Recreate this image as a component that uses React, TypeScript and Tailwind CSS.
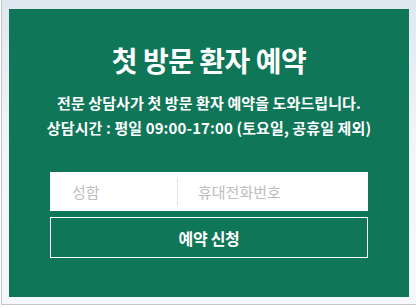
export default function App() {
  const font = { fontFamily: '"Noto Sans CJK KR", "Noto Sans", sans-serif' };
  return (
    <div className="w-[416px] h-[308px] bg-white overflow-hidden" style={font}>
      <div className="h-[305px] ml-px border-l border-b border-[#c4c6c8] bg-gradient-to-b from-[#dfe7f0] via-[#f3f6f8] to-[#f6f8f9] pl-[7px] pt-[9px] pr-[6px]">
        <section className="w-[400px] h-[288px] bg-[#0f7658] flex flex-col items-center text-white">
          <h2 className="mt-[33px] text-[28px] leading-[36px] font-bold tracking-[-0.5px]">
            첫 방문 환자 예약
          </h2>
          <p className="mt-[12px] text-[15px] leading-[25px] font-bold tracking-[0.1px] text-center">
            전문 상담사가 첫 방문 환자 예약을 도와드립니다.
            <br />
            상담시간 : 평일 09:00-17:00 (토요일, 공휴일 제외)
          </p>
          <div className="mt-[32px] w-[318px] h-[39px] bg-white flex items-center">
            <input
              placeholder="성함"
              className="w-[127px] h-full pl-[22px] text-[15px] text-[#555] placeholder:text-[#bdbdbd] outline-none bg-transparent"
            />
            <span className="w-px h-[28px] bg-[#e2e2e2]" />
            <input
              placeholder="휴대전화번호"
              className="flex-1 min-w-0 h-full pl-[20px] text-[15px] text-[#555] placeholder:text-[#bdbdbd] outline-none bg-transparent"
            />
          </div>
          <button className="mt-[6px] w-[318px] h-[41px] border border-white text-[16px] font-bold tracking-[-0.3px]">
            예약 신청
          </button>
        </section>
      </div>
    </div>
  );
}
